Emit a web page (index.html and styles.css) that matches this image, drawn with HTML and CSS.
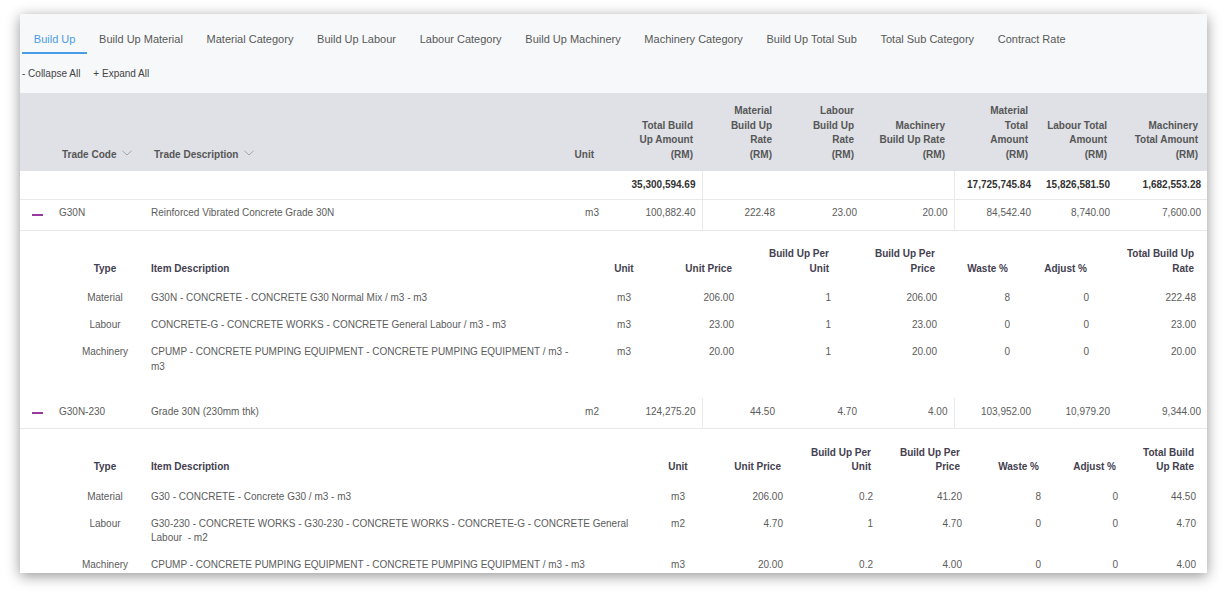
FILE: index.html
```html
<!DOCTYPE html>
<html>
<head>
<meta charset="utf-8">
<link rel="stylesheet" href="styles.css">
</head>
<body>
<div class="card">
  <div class="tabs">
    <div class="tab active">Build Up</div>
    <div class="tab">Build Up Material</div>
    <div class="tab">Material Category</div>
    <div class="tab">Build Up Labour</div>
    <div class="tab">Labour Category</div>
    <div class="tab">Build Up Machinery</div>
    <div class="tab">Machinery Category</div>
    <div class="tab">Build Up Total Sub</div>
    <div class="tab">Total Sub Category</div>
    <div class="tab">Contract Rate</div>
  </div>
  <div class="actions">
    <span class="action">- Collapse All</span>
    <span class="action">+ Expand All</span>
  </div>
  <table class="grid">
    <colgroup>
      <col class="c-exp"><col class="c-code"><col class="c-desc"><col class="c-unit"><col class="c-total">
      <col class="c-mr"><col class="c-lr"><col class="c-cr"><col class="c-mt"><col class="c-lt"><col class="c-ct">
    </colgroup>
    <thead>
      <tr class="head">
        <th></th>
        <th class="left">Trade Code <svg class="chev" width="10" height="6" viewBox="0 0 10 6"><polyline points="0.5,0.8 5,5 9.5,0.8" fill="none" stroke="#a2a4ab" stroke-width="1"/></svg></th>
        <th class="left">Trade Description <svg class="chev" width="10" height="6" viewBox="0 0 10 6"><polyline points="0.5,0.8 5,5 9.5,0.8" fill="none" stroke="#a2a4ab" stroke-width="1"/></svg></th>
        <th class="unit-h">Unit</th>
        <th>Total Build<br>Up Amount<br>(RM)</th>
        <th>Material<br>Build Up<br>Rate<br>(RM)</th>
        <th>Labour<br>Build Up<br>Rate<br>(RM)</th>
        <th>Machinery<br>Build Up Rate<br>(RM)</th>
        <th>Material<br>Total<br>Amount<br>(RM)</th>
        <th>Labour Total<br>Amount<br>(RM)</th>
        <th>Machinery<br>Total Amount<br>(RM)</th>
      </tr>
    </thead>
    <tbody>
      <tr class="total">
        <td></td><td></td><td></td><td></td>
        <td class="num">35,300,594.69</td>
        <td class="num sep"></td><td class="num"></td><td class="num"></td>
        <td class="num sep">17,725,745.84</td>
        <td class="num">15,826,581.50</td>
        <td class="num">1,682,553.28</td>
      </tr>
      <tr class="item">
        <td class="exp"><span class="dash"></span></td>
        <td class="left">G30N</td>
        <td class="left">Reinforced Vibrated Concrete Grade 30N</td>
        <td class="num">m3</td>
        <td class="num">100,882.40</td>
        <td class="num sep">222.48</td>
        <td class="num">23.00</td>
        <td class="num">20.00</td>
        <td class="num sep">84,542.40</td>
        <td class="num">8,740.00</td>
        <td class="num">7,600.00</td>
      </tr>
      <tr class="detail">
        <td colspan="11">
          <div class="detail-wrap">
            <table class="sub sub-a">
              <colgroup>
                <col class="s-type"><col class="s-desc"><col class="s-unit"><col class="s-price"><col class="s-bpu">
                <col class="s-bpp"><col class="s-waste"><col class="s-adj"><col class="s-tot">
              </colgroup>
              <thead>
                <tr>
                  <th class="center">Type</th>
                  <th class="left">Item Description</th>
                  <th class="center">Unit</th>
                  <th>Unit Price</th>
                  <th>Build Up Per<br>Unit</th>
                  <th>Build Up Per<br>Price</th>
                  <th>Waste %</th>
                  <th>Adjust %</th>
                  <th>Total Build Up<br>Rate</th>
                </tr>
              </thead>
              <tbody>
                <tr>
                  <td class="center">Material</td>
                  <td class="left">G30N - CONCRETE - CONCRETE G30 Normal Mix / m3 - m3</td>
                  <td class="center">m3</td>
                  <td>206.00</td><td>1</td><td>206.00</td><td>8</td><td>0</td><td>222.48</td>
                </tr>
                <tr>
                  <td class="center">Labour</td>
                  <td class="left">CONCRETE-G - CONCRETE WORKS - CONCRETE General Labour / m3 - m3</td>
                  <td class="center">m3</td>
                  <td>23.00</td><td>1</td><td>23.00</td><td>0</td><td>0</td><td>23.00</td>
                </tr>
                <tr>
                  <td class="center">Machinery</td>
                  <td class="left">CPUMP - CONCRETE PUMPING EQUIPMENT - CONCRETE PUMPING EQUIPMENT / m3 - m3</td>
                  <td class="center">m3</td>
                  <td>20.00</td><td>1</td><td>20.00</td><td>0</td><td>0</td><td>20.00</td>
                </tr>
              </tbody>
            </table>
          </div>
        </td>
      </tr>
      <tr class="item">
        <td class="exp"><span class="dash"></span></td>
        <td class="left">G30N-230</td>
        <td class="left">Grade 30N (230mm thk)</td>
        <td class="num">m2</td>
        <td class="num">124,275.20</td>
        <td class="num sep">44.50</td>
        <td class="num">4.70</td>
        <td class="num">4.00</td>
        <td class="num sep">103,952.00</td>
        <td class="num">10,979.20</td>
        <td class="num">9,344.00</td>
      </tr>
      <tr class="detail">
        <td colspan="11">
          <div class="detail-wrap">
            <table class="sub sub-b">
              <colgroup>
                <col class="s-type"><col class="s-desc"><col class="s-unit"><col class="s-price"><col class="s-bpu">
                <col class="s-bpp"><col class="s-waste"><col class="s-adj"><col class="s-tot">
              </colgroup>
              <thead>
                <tr>
                  <th class="center">Type</th>
                  <th class="left">Item Description</th>
                  <th class="center">Unit</th>
                  <th>Unit Price</th>
                  <th>Build Up Per<br>Unit</th>
                  <th>Build Up Per<br>Price</th>
                  <th>Waste %</th>
                  <th>Adjust %</th>
                  <th>Total Build<br>Up Rate</th>
                </tr>
              </thead>
              <tbody>
                <tr>
                  <td class="center">Material</td>
                  <td class="left">G30 - CONCRETE - Concrete G30 / m3 - m3</td>
                  <td class="center">m3</td>
                  <td>206.00</td><td>0.2</td><td>41.20</td><td>8</td><td>0</td><td>44.50</td>
                </tr>
                <tr>
                  <td class="center">Labour</td>
                  <td class="left">G30-230 - CONCRETE WORKS - G30-230 - CONCRETE WORKS - CONCRETE-G - CONCRETE General Labour&nbsp; - m2</td>
                  <td class="center">m2</td>
                  <td>4.70</td><td>1</td><td>4.70</td><td>0</td><td>0</td><td>4.70</td>
                </tr>
                <tr>
                  <td class="center">Machinery</td>
                  <td class="left">CPUMP - CONCRETE PUMPING EQUIPMENT - CONCRETE PUMPING EQUIPMENT / m3 - m3</td>
                  <td class="center">m3</td>
                  <td>20.00</td><td>0.2</td><td>4.00</td><td>0</td><td>0</td><td>4.00</td>
                </tr>
              </tbody>
            </table>
          </div>
        </td>
      </tr>
    </tbody>
  </table>
</div>
</body>
</html>
```

FILE: styles.css
```css
* { box-sizing: border-box; }
html, body { margin: 0; padding: 0; background: #ffffff; }
body {
  font-family: "Liberation Sans", Arial, sans-serif;
  font-size: 10px;
  color: #5c5c5c;
  padding: 14px 21px 0 20px;
  height: 599px;
  overflow: hidden;
}
.card {
  width: 1187px;
  height: 559px;
  overflow: hidden;
  background: #ffffff;
  box-shadow: 0 3px 13px rgba(0, 0, 0, 0.42);
}
.tabs {
  display: flex;
  background: #f7f8fa;
  padding-left: 2px;
}
.tab {
  font-size: 11px;
  line-height: 14px;
  padding: 18px 11.85px 6px;
  border-bottom: 2px solid transparent;
  color: #585858;
  white-space: nowrap;
}
.tab.active {
  color: #4a9ce6;
  border-bottom-color: #4a9ce6;
}
.actions {
  display: flex;
  gap: 13px;
  background: #f7f8fa;
  padding: 13px 2px 12px;
  line-height: 14px;
  color: #444;
}
.grid {
  width: 1187px;
  table-layout: fixed;
  border-collapse: collapse;
}
.c-exp { width: 32px; }
.c-code { width: 92px; }
.c-desc { width: 396px; }
.c-unit { width: 65px; }
.c-total { width: 97px; }
.c-mr { width: 79px; }
.c-lr { width: 82px; }
.c-cr { width: 91px; }
.c-mt { width: 83px; }
.c-lt { width: 79px; }
.c-ct { width: 91px; }

.grid th, .grid td { padding: 0; }
.head { height: 78px; background: #dfe1e6; }
.head th {
  vertical-align: bottom;
  text-align: right;
  font-weight: bold;
  color: #565656;
  line-height: 14.5px;
  padding: 0 9px 9px 0;
  white-space: nowrap;
}
.head th.left { text-align: left; padding-left: 10px; }
.head th.unit-h { padding-right: 11px; }
.chev { margin-left: 3px; vertical-align: 2px; }

.total { height: 28px; border-bottom: 1px solid #e8e9eb; }
.total td { font-weight: bold; color: #333; padding-top: 1px; }
.item { height: 31px; border-bottom: 1px solid #e8e9eb; }
.total td, .item td {
  line-height: 14.5px;
  vertical-align: middle;
  white-space: nowrap;
}
.item td { padding-bottom: 2px; color: #5c5c5c; }
.total td.num, .item td.num { text-align: right; padding-right: 6px; }
.item td.left { padding-left: 7px; }
.item td.exp { padding-left: 12px; }
.sep { border-left: 1px solid #e8e9eb; }
.dash {
  display: block;
  width: 11px;
  height: 2px;
  margin-top: 2px;
  background: #98399f;
}

.detail td { padding: 0; }
.detail-wrap { padding: 16.5px 5px 17px 45px; }
.sub {
  width: 1137px;
  table-layout: fixed;
  border-collapse: collapse;
}
.sub th {
  font-weight: bold;
  color: #444050;
  text-align: right;
  vertical-align: bottom;
  line-height: 14.5px;
  padding: 0 8px 9px 6px;
  white-space: nowrap;
}
.sub td {
  text-align: right;
  vertical-align: top;
  line-height: 14.5px;
  padding: 6.25px 6px;
  color: #5c5c5c;
}
.sub .left { text-align: left; }
.sub .center { text-align: center; }
.sub th.center, .sub td.center { padding-left: 0; padding-right: 0; }

.sub-a .s-type { width: 80px; }
.sub-a .s-desc { width: 440px; }
.sub-a .s-unit { width: 78px; }
.sub-a .s-price { width: 77px; }
.sub-a .s-bpu { width: 97px; }
.sub-a .s-bpp { width: 106px; }
.sub-a .s-waste { width: 73px; }
.sub-a .s-adj { width: 79px; }
.sub-a .s-tot { width: 107px; }

.sub-b .s-type { width: 80px; }
.sub-b .s-desc { width: 502px; }
.sub-b .s-unit { width: 62px; }
.sub-b .s-price { width: 80px; }
.sub-b .s-bpu { width: 90px; }
.sub-b .s-bpp { width: 89px; }
.sub-b .s-waste { width: 79px; }
.sub-b .s-adj { width: 77px; }
.sub-b .s-tot { width: 78px; }
```
